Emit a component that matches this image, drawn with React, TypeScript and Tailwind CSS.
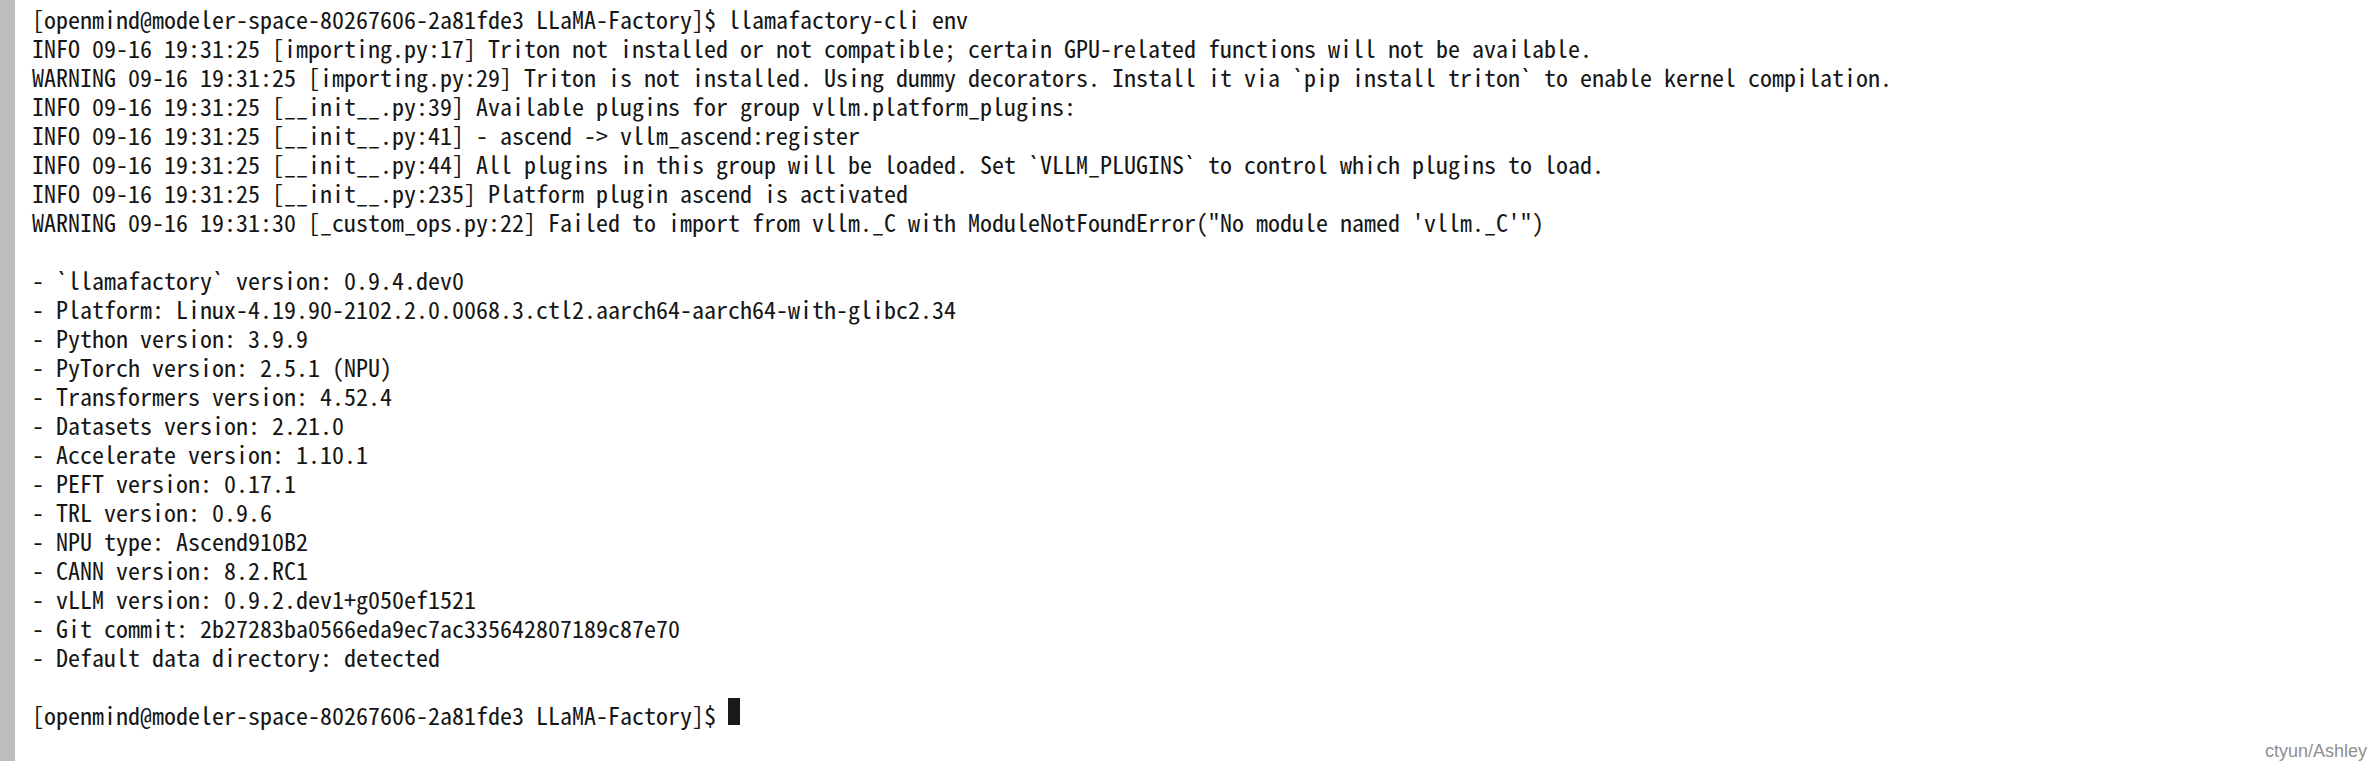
const LINES: string[] = [
  "[openmind@modeler-space-80267606-2a81fde3 LLaMA-Factory]$ llamafactory-cli env",
  "INFO 09-16 19:31:25 [importing.py:17] Triton not installed or not compatible; certain GPU-related functions will not be available.",
  "WARNING 09-16 19:31:25 [importing.py:29] Triton is not installed. Using dummy decorators. Install it via `pip install triton` to enable kernel compilation.",
  "INFO 09-16 19:31:25 [__init__.py:39] Available plugins for group vllm.platform_plugins:",
  "INFO 09-16 19:31:25 [__init__.py:41] - ascend -> vllm_ascend:register",
  "INFO 09-16 19:31:25 [__init__.py:44] All plugins in this group will be loaded. Set `VLLM_PLUGINS` to control which plugins to load.",
  "INFO 09-16 19:31:25 [__init__.py:235] Platform plugin ascend is activated",
  "WARNING 09-16 19:31:30 [_custom_ops.py:22] Failed to import from vllm._C with ModuleNotFoundError(\"No module named 'vllm._C'\")",
  "",
  "- `llamafactory` version: 0.9.4.dev0",
  "- Platform: Linux-4.19.90-2102.2.0.0068.3.ctl2.aarch64-aarch64-with-glibc2.34",
  "- Python version: 3.9.9",
  "- PyTorch version: 2.5.1 (NPU)",
  "- Transformers version: 4.52.4",
  "- Datasets version: 2.21.0",
  "- Accelerate version: 1.10.1",
  "- PEFT version: 0.17.1",
  "- TRL version: 0.9.6",
  "- NPU type: Ascend910B2",
  "- CANN version: 8.2.RC1",
  "- vLLM version: 0.9.2.dev1+g050ef1521",
  "- Git commit: 2b27283ba0566eda9ec7ac335642807189c87e70",
  "- Default data directory: detected",
  "",
];

const PROMPT = "[openmind@modeler-space-80267606-2a81fde3 LLaMA-Factory]$ ";

export default function App() {
  return (
    <div className="relative flex h-[761px] w-full overflow-hidden bg-white">
      {/* left window edge */}
      <div className="w-[15px] shrink-0 bg-[#bdbdbd]" />

      {/* terminal buffer */}
      <div
        className="flex-1 pl-[17px] pt-[4px] text-[24px] leading-[29px] text-[#151515]"
        style={{ fontFamily: '"Noto Sans Mono CJK SC", "Liberation Mono", monospace' }}
      >
        {LINES.map((line, i) => (
          <div key={i} className="h-[29px] whitespace-pre">
            {line}
          </div>
        ))}
        <div className="flex h-[29px] items-start whitespace-pre">
          <span>{PROMPT}</span>
          <span className="-mt-[2px] h-[27px] w-[12px] bg-[#1a1a1a]" />
        </div>
      </div>

      {/* watermark */}
      <div
        className="absolute bottom-[-1px] right-[1px] text-[18px] leading-[22px] text-[#8f8f8f]"
        style={{ fontFamily: '"Liberation Sans", Arial, sans-serif' }}
      >
        ctyun/Ashley
      </div>
    </div>
  );
}
